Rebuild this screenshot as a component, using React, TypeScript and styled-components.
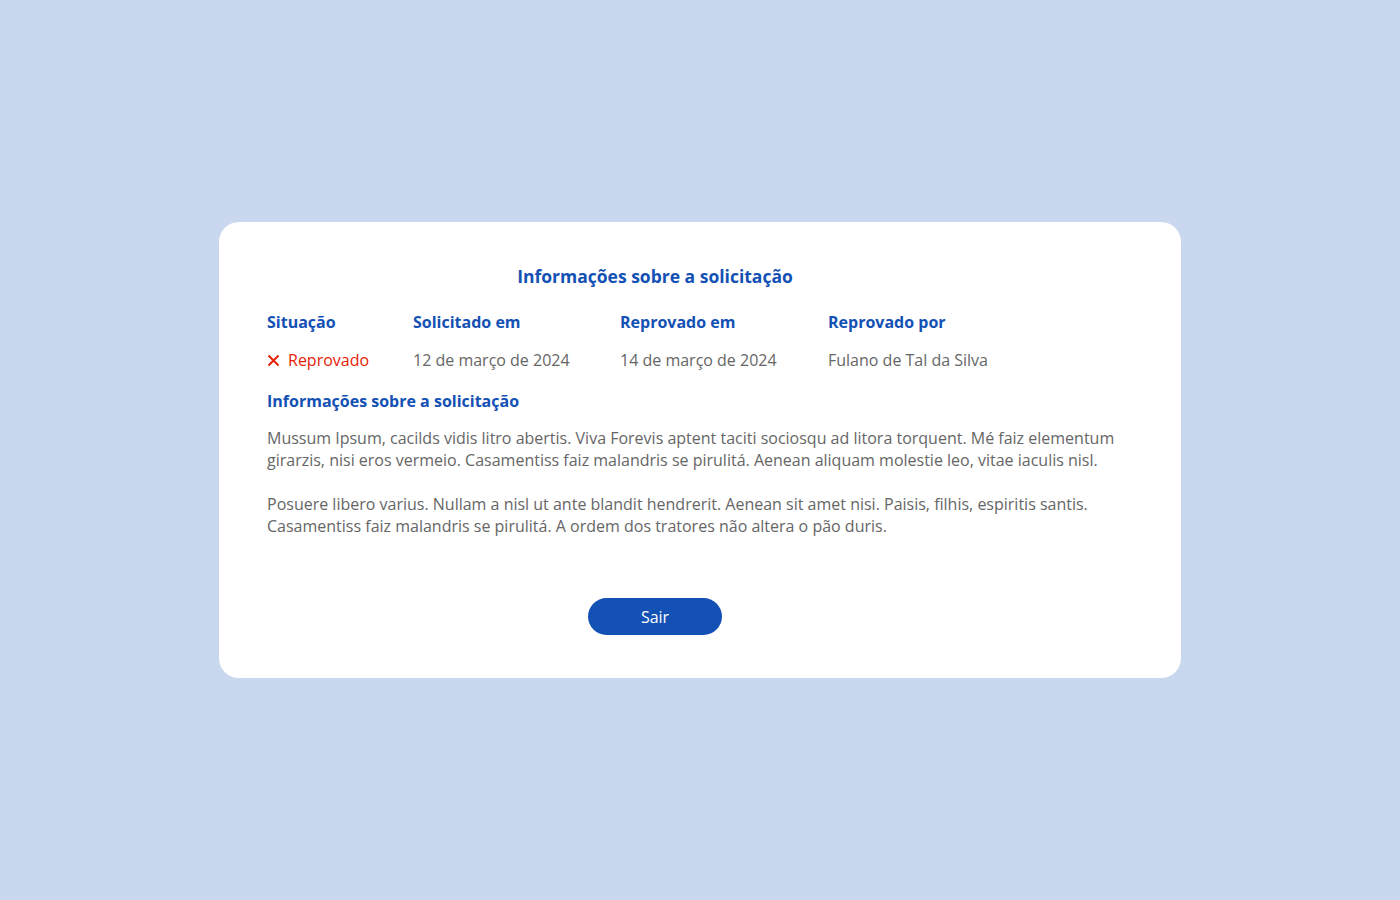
import React from 'react'
import styled, { createGlobalStyle } from 'styled-components'

const GlobalStyle = createGlobalStyle`
  html, body {
    margin: 0;
    padding: 0;
    background: #c9d8ee;
    font-family: 'Open Sans', 'Liberation Sans', sans-serif;
  }
`

const Page = styled.div`
  min-height: 900px;
  display: flex;
  align-items: center;
  justify-content: center;
`

const Card = styled.div`
  width: 962px;
  box-sizing: border-box;
  background: #fff;
  border-radius: 20px;
  padding: 43px 48px 43px;
`

const Centered = styled.div`
  width: 776px;
  display: flex;
  justify-content: center;
`

const Title = styled.h2`
  margin: 0;
  font-size: 17.5px;
  line-height: 22px;
  font-weight: 700;
  color: #1351b4;
`

const InfoGrid = styled.div`
  display: grid;
  grid-template-columns: 146px 207px 208px 1fr;
  row-gap: 16px;
  margin-top: 24px;
`

const Label = styled.div`
  font-size: 16px;
  line-height: 22px;
  font-weight: 700;
  color: #1351b4;
`

const Value = styled.div<{ $danger?: boolean }>`
  display: flex;
  align-items: center;
  gap: 8px;
  font-size: 16px;
  line-height: 22px;
  color: ${(p) => (p.$danger ? '#e52207' : '#666')};
`

const SectionLabel = styled(Label)`
  margin-top: 19px;
`

const Paragraph = styled.p`
  margin: 15px 0 0;
  font-size: 16px;
  line-height: 22px;
  color: #666;

  & + & {
    margin-top: 22px;
  }
`

const Actions = styled(Centered)`
  margin-top: 61px;
`

const Button = styled.button`
  width: 134px;
  height: 37px;
  border: none;
  border-radius: 19px;
  background: #1351b4;
  color: #fff;
  font-family: inherit;
  font-size: 16px;
  cursor: pointer;
`

const CrossIcon = () => (
  <svg width="13" height="13" viewBox="0 0 13 13" aria-hidden>
    <path d="M1.5 1.5l10 10M11.5 1.5l-10 10" stroke="#e52207" strokeWidth="2" />
  </svg>
)

const App: React.FC = () => {
  return (
    <>
      <GlobalStyle />
      <Page>
        <Card>
          <Centered>
            <Title>Informações sobre a solicitação</Title>
          </Centered>
          <InfoGrid>
            <Label>Situação</Label>
            <Label>Solicitado em</Label>
            <Label>Reprovado em</Label>
            <Label>Reprovado por</Label>
            <Value $danger>
              <CrossIcon />
              Reprovado
            </Value>
            <Value>12 de março de 2024</Value>
            <Value>14 de março de 2024</Value>
            <Value>Fulano de Tal da Silva</Value>
          </InfoGrid>
          <SectionLabel>Informações sobre a solicitação</SectionLabel>
          <Paragraph>
            Mussum Ipsum, cacilds vidis litro abertis. Viva Forevis aptent taciti sociosqu ad litora
            torquent. Mé faiz elementum girarzis, nisi eros vermeio. Casamentiss faiz malandris se
            pirulitá. Aenean aliquam molestie leo, vitae iaculis nisl.
          </Paragraph>
          <Paragraph>
            Posuere libero varius. Nullam a nisl ut ante blandit hendrerit. Aenean sit amet nisi.
            Paisis, filhis, espiritis santis. Casamentiss faiz malandris se pirulitá. A ordem dos
            tratores não altera o pão duris.
          </Paragraph>
          <Actions>
            <Button>Sair</Button>
          </Actions>
        </Card>
      </Page>
    </>
  )
}

export default App
